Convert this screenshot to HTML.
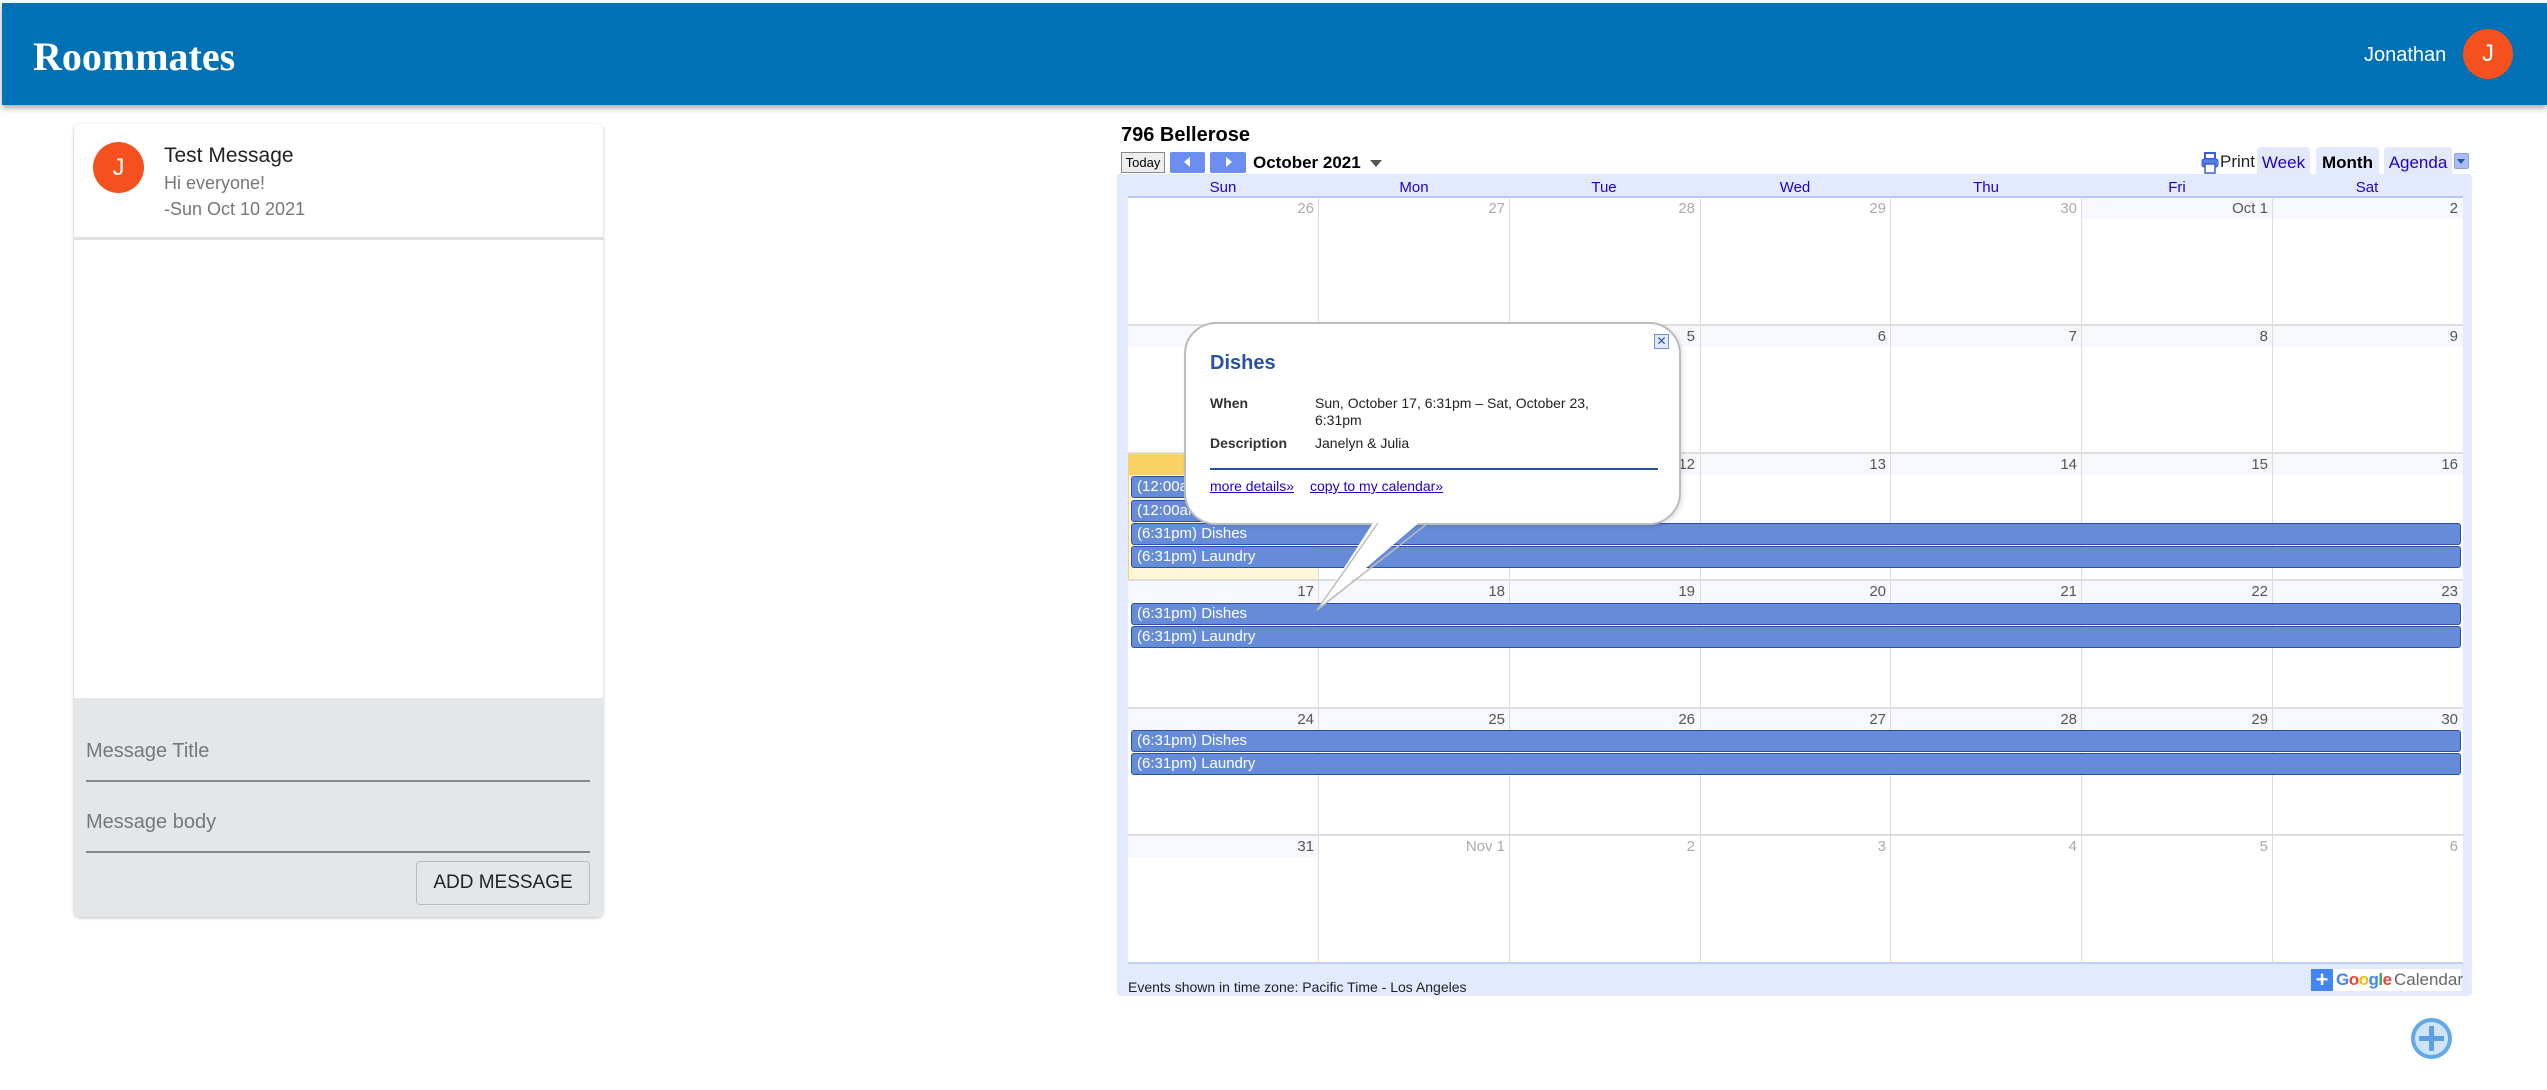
<!DOCTYPE html>
<html><head><meta charset="utf-8">
<style>
*{margin:0;padding:0;box-sizing:border-box}
body{width:2547px;height:1090px;background:#fff;position:relative;overflow:hidden;font-family:"Liberation Sans",Arial,sans-serif}
.a{position:absolute}
.hdr{left:2px;top:3px;width:2545px;height:102px;background:#0071b5;box-shadow:0 3px 6px rgba(0,0,0,.35)}
.vl{position:absolute;top:197px;width:1px;height:766px;background:#ddd}
.hl{position:absolute;left:1128px;width:1335px;height:2px;background:#ddd}
.band{position:absolute;height:21px;background:#f6f8fe}
.dn{position:absolute;width:186px;text-align:right;font-size:15px;color:#555}
.dn.o{color:#aaa}
.dh{position:absolute;top:179px;width:190px;text-align:center;font-size:15px;color:#2200cc}
.ev{position:absolute;height:22px;background:#668cd9;border:1px solid #2952a3;border-radius:3px;color:#fff;font-size:15px;line-height:20px;padding-left:5px;white-space:nowrap;overflow:hidden}
</style></head><body>
<div class="a hdr"></div>
<div class="a" style="left:33px;top:33px;font-family:'Liberation Serif',serif;font-weight:bold;font-size:40px;color:#fff">Roommates</div>
<div class="a" style="left:2364px;top:44px;font-size:20px;color:#fff">Jonathan</div>
<div class="a" style="left:2463px;top:29px;width:50px;height:50px;border-radius:50%;background:#f4511e;color:#fff;font-size:24px;text-align:center;line-height:50px">J</div>

<!-- message card -->
<div class="a" style="left:74px;top:124px;width:529px;height:793px;background:#fff;border-radius:6px;box-shadow:0 1px 3px rgba(0,0,0,.25)"></div>
<div class="a" style="left:93px;top:142px;width:51px;height:51px;border-radius:50%;background:#f4511e;color:#fff;font-size:24px;text-align:center;line-height:51px">J</div>
<div class="a" style="left:164px;top:144px;font-size:21px;color:#222">Test Message</div>
<div class="a" style="left:164px;top:173px;font-size:18px;color:#777">Hi everyone!</div>
<div class="a" style="left:164px;top:199px;font-size:18px;color:#777">-Sun Oct 10 2021</div>
<div class="a" style="left:74px;top:237px;width:529px;height:3px;background:#e0e0e0"></div>
<div class="a" style="left:74px;top:698px;width:529px;height:219px;background:#e4e7ea;border-radius:0 0 6px 6px"></div>
<div class="a" style="left:86px;top:740px;font-size:20px;color:#777">Message Title</div>
<div class="a" style="left:86px;top:780px;width:504px;height:2px;background:#888"></div>
<div class="a" style="left:86px;top:811px;font-size:20px;color:#777">Message body</div>
<div class="a" style="left:86px;top:851px;width:504px;height:2px;background:#888"></div>
<div class="a" style="left:416px;top:861px;width:174px;height:44px;border:1px solid #bbb;border-radius:4px;font-size:19px;color:#222;text-align:center;line-height:42px">ADD MESSAGE</div>

<!-- calendar title/toolbar -->
<div class="a" style="left:1121px;top:124px;font-size:20px;font-weight:bold;color:#000">796 Bellerose</div>
<div class="a" style="left:1121px;top:152px;width:44px;height:21px;border:1px solid #888;background:#eee;font-size:13px;line-height:19px;text-align:center">Today</div>
<div class="a" style="left:1170px;top:152px;width:35px;height:21px;background:#6b8ef0;border-radius:2px"></div>
<div class="a" style="left:1184px;top:157px;width:0;height:0;border-top:5px solid transparent;border-bottom:5px solid transparent;border-right:6px solid #fff"></div>
<div class="a" style="left:1210px;top:152px;width:36px;height:21px;background:#6b8ef0;border-radius:2px"></div>
<div class="a" style="left:1226px;top:157px;width:0;height:0;border-top:5px solid transparent;border-bottom:5px solid transparent;border-left:6px solid #fff"></div>
<div class="a" style="left:1253px;top:153px;font-size:17px;font-weight:bold">October 2021</div>
<div class="a" style="left:1370px;top:160px;width:0;height:0;border-left:6px solid transparent;border-right:6px solid transparent;border-top:7px solid #555"></div>
<svg class="a" style="left:2201px;top:152px" width="18" height="22" viewBox="0 0 18 22"><rect x="4" y="1" width="10" height="6" fill="#fff" stroke="#3b5bdb" stroke-width="2"/><rect x="1" y="7" width="16" height="8" rx="2" fill="#5a7de0" stroke="#3b5bdb"/><rect x="4" y="12" width="10" height="9" fill="#fff" stroke="#3b5bdb" stroke-width="1.5"/></svg>
<div class="a" style="left:2220px;top:152px;font-size:17px;color:#222">Print</div>
<div class="a" style="left:2257px;top:147px;width:53px;height:28px;background:#e3e9f8;border-radius:4px 4px 0 0;font-size:17px;color:#2200cc;text-align:center;line-height:32px">Week</div>
<div class="a" style="left:2316px;top:147px;width:63px;height:28px;background:#e3e9ff;border-radius:4px 4px 0 0;font-size:17px;font-weight:bold;text-align:center;line-height:32px">Month</div>
<div class="a" style="left:2384px;top:147px;width:68px;height:28px;background:#e3e9f8;border-radius:4px 4px 0 0;font-size:17px;color:#2200cc;text-align:center;line-height:32px">Agenda</div>
<div class="a" style="left:2454px;top:153px;width:15px;height:16px;background:#a9bdf2;border:1px solid #8aa3e8;border-radius:2px"></div>
<div class="a" style="left:2457px;top:159px;width:0;height:0;border-left:4px solid transparent;border-right:4px solid transparent;border-top:5px solid #2952a3"></div>

<!-- calendar frame -->
<div class="a" style="left:1117px;top:174px;width:1355px;height:822px;background:#e3e9ff;border-radius:0 4px 4px 4px"></div>
<div class="a" style="left:1128px;top:197px;width:1335px;height:766px;background:#fff"></div>
<div class="a" style="left:1128px;top:196px;width:1335px;height:2px;background:#b7c6f5"></div>
<div class="a" style="left:1128px;top:962px;width:1335px;height:2px;background:#c3cff0"></div>
<div class="dh" style="left:1128px">Sun</div><div class="dh" style="left:1319px">Mon</div><div class="dh" style="left:1509px">Tue</div><div class="dh" style="left:1700px">Wed</div><div class="dh" style="left:1891px">Thu</div><div class="dh" style="left:2082px">Fri</div><div class="dh" style="left:2272px">Sat</div>

<!-- bands -->
<div class="band" style="left:2082px;top:198px;width:381px"></div>
<div class="band" style="left:1128px;top:326px;width:1335px"></div>
<div class="band" style="left:1319px;top:454px;width:1144px"></div>
<div class="band" style="left:1128px;top:581px;width:1335px"></div>
<div class="band" style="left:1128px;top:709px;width:1335px"></div>
<div class="band" style="left:1128px;top:836px;width:191px"></div>
<!-- today -->
<div class="a" style="left:1128px;top:453px;width:191px;height:127px;background:#fff7d7;border:1px solid #fad163"></div>
<div class="a" style="left:1128px;top:453px;width:191px;height:22px;background:#fad163"></div>

<div class="vl" style="left:1318px"></div><div class="vl" style="left:1509px"></div><div class="vl" style="left:1700px"></div><div class="vl" style="left:1890px"></div><div class="vl" style="left:2081px"></div><div class="vl" style="left:2272px"></div>
<div class="hl" style="top:324px"></div><div class="hl" style="top:452px"></div><div class="hl" style="top:579px"></div><div class="hl" style="top:707px"></div><div class="hl" style="top:834px"></div>

<!-- day numbers -->
<div class="dn o" style="left:1128px;top:200px">26</div><div class="dn o" style="left:1319px;top:200px">27</div><div class="dn o" style="left:1509px;top:200px">28</div><div class="dn o" style="left:1700px;top:200px">29</div><div class="dn o" style="left:1891px;top:200px">30</div><div class="dn" style="left:2082px;top:200px">Oct 1</div><div class="dn" style="left:2272px;top:200px">2</div>
<div class="dn" style="left:1128px;top:328px">3</div><div class="dn" style="left:1319px;top:328px">4</div><div class="dn" style="left:1509px;top:328px">5</div><div class="dn" style="left:1700px;top:328px">6</div><div class="dn" style="left:1891px;top:328px">7</div><div class="dn" style="left:2082px;top:328px">8</div><div class="dn" style="left:2272px;top:328px">9</div>
<div class="dn" style="left:1128px;top:456px">10</div><div class="dn" style="left:1319px;top:456px">11</div><div class="dn" style="left:1509px;top:456px">12</div><div class="dn" style="left:1700px;top:456px">13</div><div class="dn" style="left:1891px;top:456px">14</div><div class="dn" style="left:2082px;top:456px">15</div><div class="dn" style="left:2272px;top:456px">16</div>
<div class="dn" style="left:1128px;top:583px">17</div><div class="dn" style="left:1319px;top:583px">18</div><div class="dn" style="left:1509px;top:583px">19</div><div class="dn" style="left:1700px;top:583px">20</div><div class="dn" style="left:1891px;top:583px">21</div><div class="dn" style="left:2082px;top:583px">22</div><div class="dn" style="left:2272px;top:583px">23</div>
<div class="dn" style="left:1128px;top:711px">24</div><div class="dn" style="left:1319px;top:711px">25</div><div class="dn" style="left:1509px;top:711px">26</div><div class="dn" style="left:1700px;top:711px">27</div><div class="dn" style="left:1891px;top:711px">28</div><div class="dn" style="left:2082px;top:711px">29</div><div class="dn" style="left:2272px;top:711px">30</div>
<div class="dn" style="left:1128px;top:838px">31</div><div class="dn o" style="left:1319px;top:838px">Nov 1</div><div class="dn o" style="left:1509px;top:838px">2</div><div class="dn o" style="left:1700px;top:838px">3</div><div class="dn o" style="left:1891px;top:838px">4</div><div class="dn o" style="left:2082px;top:838px">5</div><div class="dn o" style="left:2272px;top:838px">6</div>

<!-- events -->
<div class="ev" style="left:1131px;top:476px;width:380px">(12:00am) Event</div>
<div class="ev" style="left:1131px;top:500px;width:380px">(12:00am) Event</div>
<div class="ev" style="left:1131px;top:523px;width:1330px">(6:31pm) Dishes</div>
<div class="ev" style="left:1131px;top:546px;width:1330px">(6:31pm) Laundry</div>
<div class="ev" style="left:1131px;top:603px;width:1330px">(6:31pm) Dishes</div>
<div class="ev" style="left:1131px;top:626px;width:1330px">(6:31pm) Laundry</div>
<div class="ev" style="left:1131px;top:730px;width:1330px">(6:31pm) Dishes</div>
<div class="ev" style="left:1131px;top:753px;width:1330px">(6:31pm) Laundry</div>

<!-- footer -->
<div class="a" style="left:1128px;top:979px;font-size:14px;color:#222">Events shown in time zone: Pacific Time - Los Angeles</div>
<div class="a" style="left:2311px;top:969px;width:150px;height:22px;background:#fff"></div>
<div class="a" style="left:2311px;top:969px;width:22px;height:22px;background:#4285f4;color:#fff;font-size:22px;line-height:21px;text-align:center;font-weight:bold">+</div>
<div class="a" style="left:2336px;top:970px;font-size:17px;font-weight:bold;letter-spacing:-0.5px"><span style="color:#4285f4">G</span><span style="color:#ea4335">o</span><span style="color:#fbbc05">o</span><span style="color:#4285f4">g</span><span style="color:#34a853">l</span><span style="color:#ea4335">e</span></div>
<div class="a" style="left:2394px;top:970px;font-size:17px;color:#666">Calendar</div>

<!-- popup -->
<div class="a" style="left:1184px;top:322px;width:497px;height:203px;background:#fff;border:2px solid #bbb;border-radius:32px;box-shadow:2px 2px 4px rgba(0,0,0,.1)"></div>
<svg class="a" style="left:1300px;top:515px" width="140" height="100"><polygon points="78,0 128,0 17,95" fill="#fff"/><polyline points="78,8 17,95 128,8" fill="none" stroke="#bbb" stroke-width="1.5"/></svg>
<div class="a" style="left:1654px;top:334px;width:15px;height:15px;border:1px solid #6b8ef0;background:#e3e9ff;color:#2952a3;font-size:12px;line-height:13px;text-align:center">✕</div>
<div class="a" style="left:1210px;top:352px;font-size:20px;font-weight:bold;color:#2952a3">Dishes</div>
<div class="a" style="left:1210px;top:395px;font-size:14px;font-weight:bold;color:#333">When</div>
<div class="a" style="left:1315px;top:395px;font-size:14px;color:#222;line-height:17px;width:340px">Sun, October 17, 6:31pm – Sat, October 23,<br>6:31pm</div>
<div class="a" style="left:1210px;top:435px;font-size:14px;font-weight:bold;color:#333">Description</div>
<div class="a" style="left:1315px;top:435px;font-size:14px;color:#222">Janelyn &amp; Julia</div>
<div class="a" style="left:1210px;top:468px;width:448px;height:2px;background:#2952a3"></div>
<div class="a" style="left:1210px;top:478px;font-size:14px;color:#2200cc;text-decoration:underline">more details»</div>
<div class="a" style="left:1310px;top:478px;font-size:14px;color:#2200cc;text-decoration:underline">copy to my calendar»</div>

<!-- fab -->
<div class="a" style="left:2411px;top:1018px;width:41px;height:41px;border-radius:50%;border:4px solid #64a8e8;background:#cfe4fa"></div>
<div class="a" style="left:2419px;top:1036px;width:25px;height:5px;background:#5aa0e2"></div>
<div class="a" style="left:2429px;top:1026px;width:5px;height:25px;background:#5aa0e2"></div>
</body></html>
